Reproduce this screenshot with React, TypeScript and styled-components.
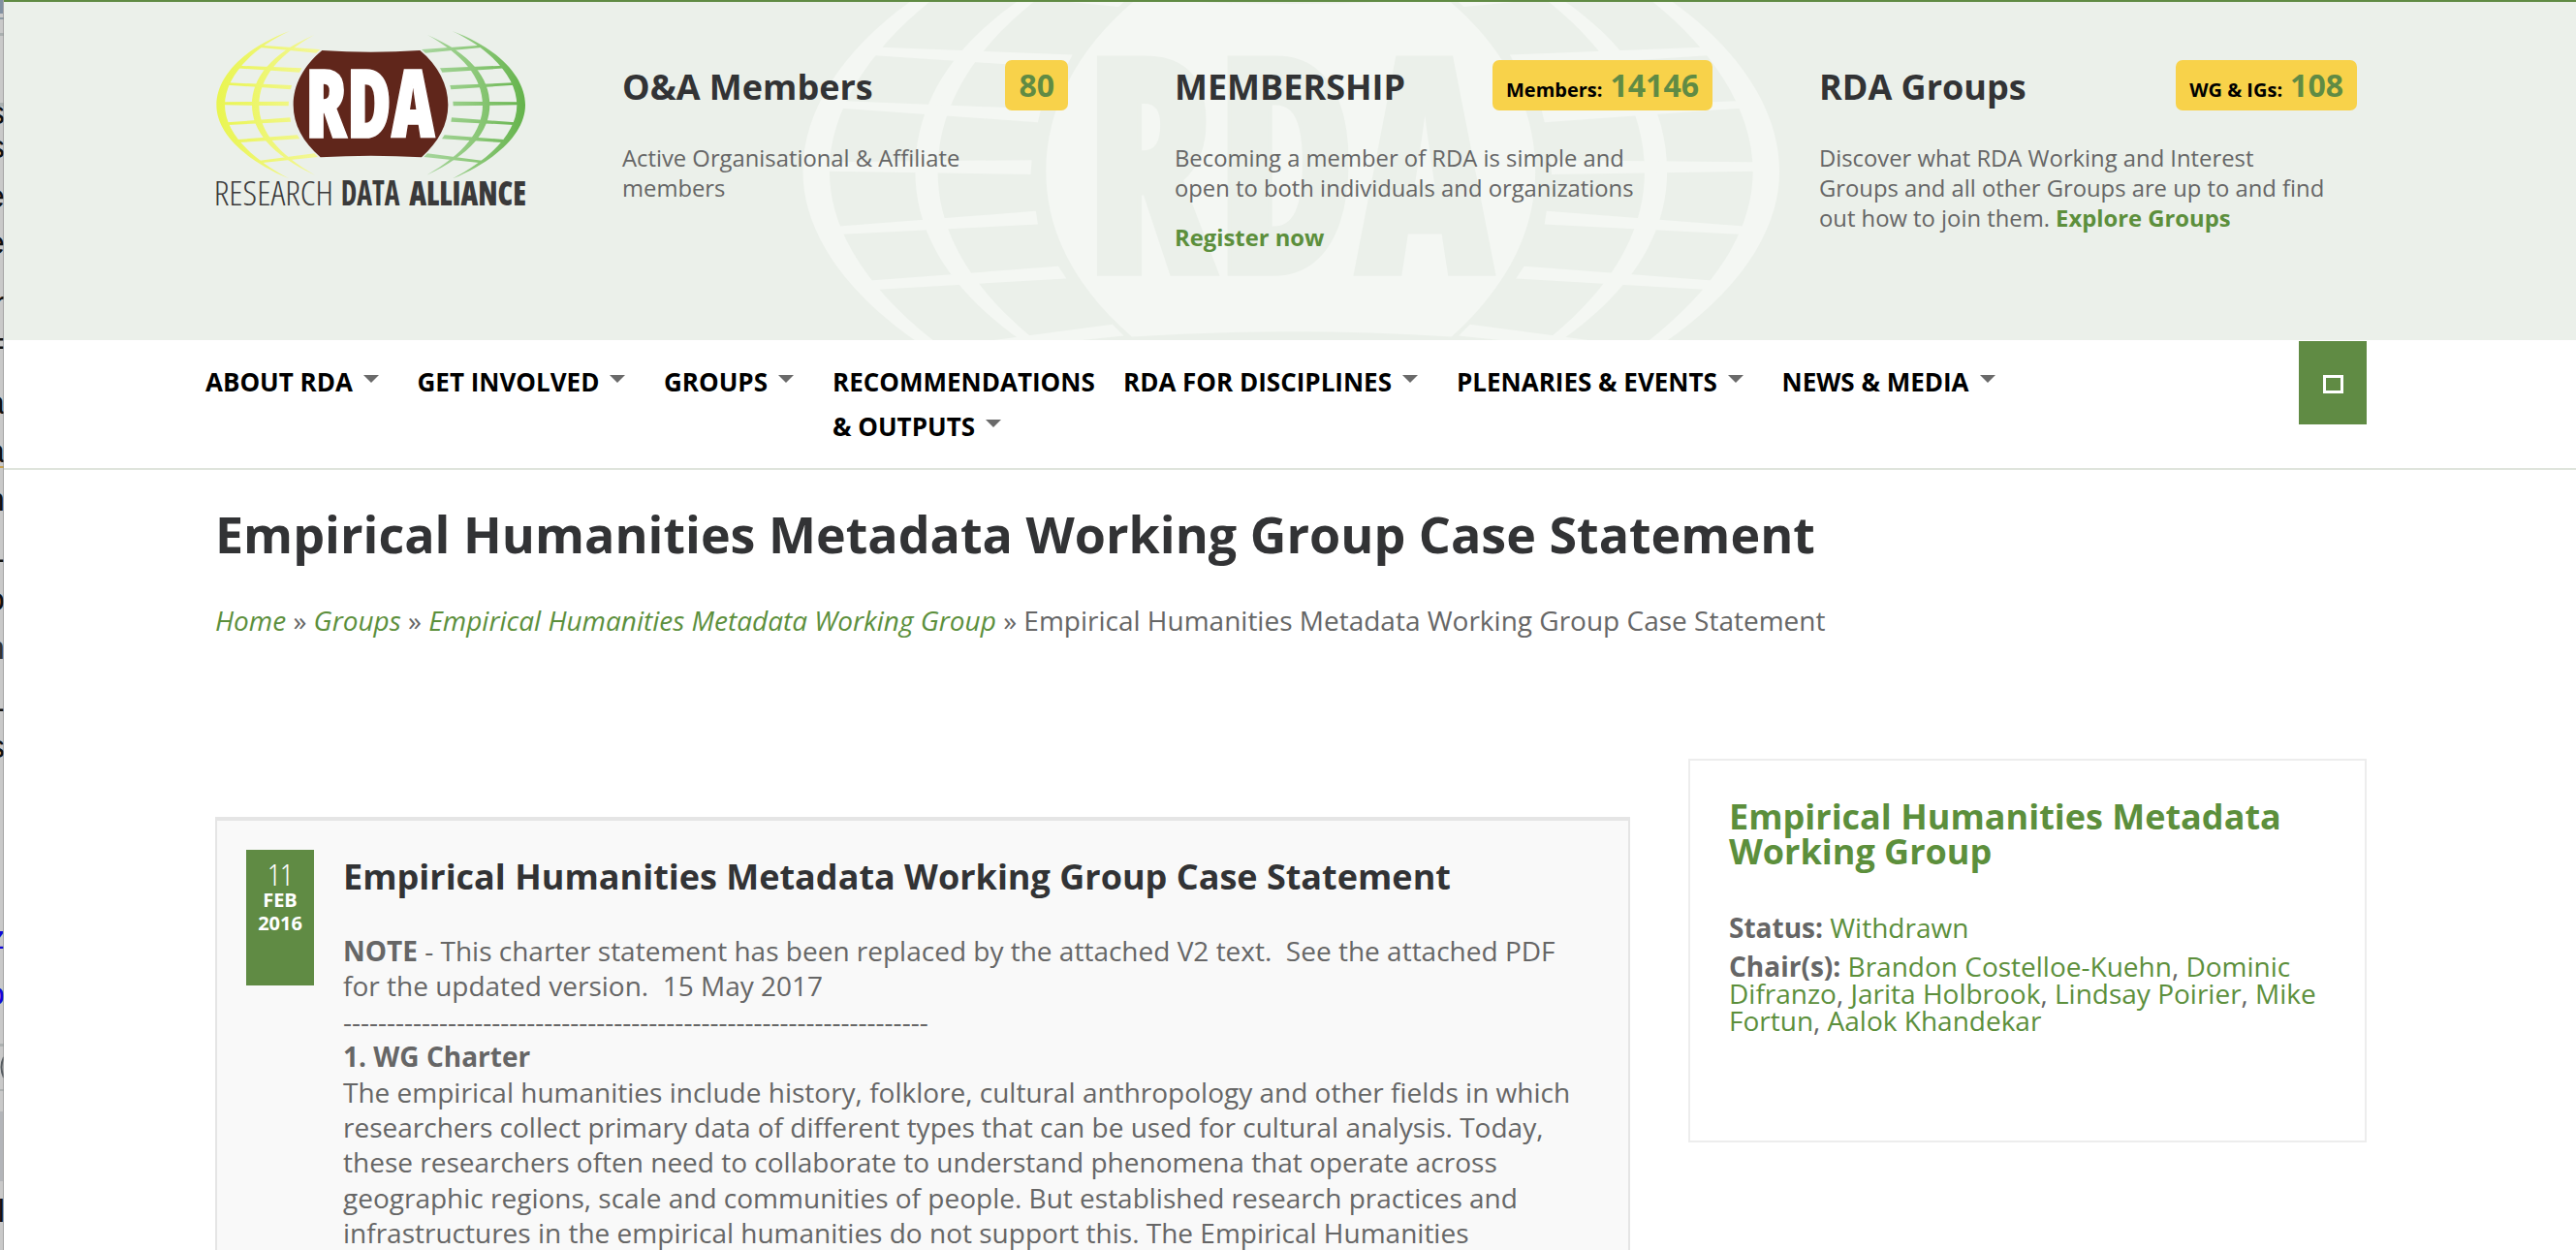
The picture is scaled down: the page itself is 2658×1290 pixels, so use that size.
import React from "react";
import styled, { createGlobalStyle } from "styled-components";

const GREEN = "#608b44";
const LINK = "#5c8f3c";
const GREY = "#666666";
const DARK = "#323335";
const PALE = "#ebf0ea";

const GlobalStyle = createGlobalStyle`
  *, *::before, *::after { box-sizing: border-box; }
  html, body { margin: 0; padding: 0; background: #fff; }
  body {
    height: 1290px;
    overflow: hidden;
    font-family: "Open Sans", "Noto Sans", sans-serif;
    font-size: 28px;
    color: ${GREY};
  }
  h1, h2, h3, p { margin: 0; }
`;

/* ---------- logo artwork ---------- */

const LATITUDES = [
  "M206,140 L391,153 L379,164 L206,147 Z",
  "M133,203 L334,211 L327,224 L130,211 Z",
  "M106,256 L303,264 L300,277 L104,263 Z",
  "M94,316 L294,314 L293,328 L94,325 Z",
  "M102,379 L298,364 L300,377 L104,387 Z",
  "M136,432 L320,418 L328,430 L140,441 Z",
  "M199,498 L373,475 L384,486 L205,505 Z",
];

type Paint = { left: string; right: string; core: string; letters: string };

function GlobeHalf({ fill }: { fill: string }) {
  return (
    <g fill={fill}>
      <path d="M297,96 C150,150 70,240 70,325 C70,408 150,492 295,553 C172,488 96,408 96,325 C96,240 176,152 297,96 Z" />
      <path d="M373,108 C240,165 180,240 180,325 C180,406 240,480 375,542 C262,478 202,406 202,325 C202,240 265,168 373,108 Z" />
      {LATITUDES.map((d) => (
        <path key={d} d={d} />
      ))}
    </g>
  );
}

const LogoLetters = styled.text`
  font-family: "Open Sans", sans-serif;
  font-size: 295px;
  font-weight: 800;
  font-stretch: 75%;
  stroke-width: 5px;
`;

function Globe({ left, right, core, letters }: Paint) {
  return (
    <g>
      <GlobeHalf fill={left} />
      <g transform="translate(1096 0) scale(-1 1)">
        <GlobeHalf fill={right} />
      </g>
      <path
        fill={core}
        d="M397,156 Q548,166 700,156 C757,203 787,262 787,325 C787,386 757,440 705,487 Q548,477 392,487 C338,440 308,386 308,325 C308,262 340,203 397,156 Z"
      />
      <LogoLetters x="346" y="425" textLength="400" lengthAdjust="spacingAndGlyphs" fill={letters} stroke={letters}>
        RDA
      </LogoLetters>
    </g>
  );
}

const LogoWord = styled.text<{ $weight: number }>`
  font-family: "Open Sans", sans-serif;
  font-size: 105px;
  font-stretch: 75%;
  font-weight: ${(p) => p.$weight};
  fill: #3a3a3a;
`;

const LogoSvg = styled.svg`
  display: block;
  width: 322px;
  height: 184px;
`;

function Logo() {
  return (
    <LogoSvg viewBox="66 90 966 552" role="img" aria-label="Research Data Alliance">
      <defs>
        <linearGradient id="sun" gradientUnits="userSpaceOnUse" x1="70" y1="0" x2="395" y2="0">
          <stop offset="0" stopColor="#e9f550" />
          <stop offset="1" stopColor="#f3f79a" />
        </linearGradient>
        <linearGradient id="leaf" gradientUnits="userSpaceOnUse" x1="70" y1="0" x2="395" y2="0">
          <stop offset="0" stopColor="#64b34b" />
          <stop offset="0.5" stopColor="#8ec97b" />
          <stop offset="1" stopColor="#a9d6a0" />
        </linearGradient>
      </defs>
      <Globe left="url(#sun)" right="url(#leaf)" core="#60261b" letters="#ffffff" />
      <LogoWord $weight={300} x="62" y="635" textLength="370" lengthAdjust="spacingAndGlyphs">
        RESEARCH
      </LogoWord>
      <LogoWord $weight={700} x="455" y="635" textLength="182" lengthAdjust="spacingAndGlyphs">
        DATA
      </LogoWord>
      <LogoWord $weight={800} x="667" y="635" textLength="362" lengthAdjust="spacingAndGlyphs">
        ALLIANCE
      </LogoWord>
    </LogoSvg>
  );
}

/* ---------- window behind, visible as a sliver on the left ---------- */

const Sliver = styled.svg`
  display: block;
  flex: none;
  width: 4px;
  height: 1290px;
  font-family: "Liberation Sans", sans-serif;
  font-size: 34px;
`;

const SLIVER_TEXT: [string, number, string][] = [
  ["s", 128, "#111"], ["s", 163, "#111"], ["e", 214, "#111"], ["e", 262, "#111"],
  ["r", 324, "#111"], ["=", 366, "#111"], ["a", 427, "#111"], ["a", 477, "#111"],
  ["n", 527, "#111"], ["-", 588, "#111"], ["o", 630, "#111"], ["n", 680, "#333"],
  ["-", 742, "#111"], ["s", 782, "#111"], ["z", 979, "#1206d8"], ["o", 1037, "#1206d8"],
  ["l", 1261, "#111"],
];

function BackWindow() {
  return (
    <Sliver aria-hidden="true">
      <rect width="4" height="1290" fill="#c9c9c9" />
      <rect width="3" height="14" fill="#8291a2" />
      <rect y="18" width="4" height="2" fill="#8c9aa4" />
      <rect y="34" width="4" height="3" fill="#aab0b0" />
      <rect y="106" width="4" height="4" fill="#aab0b0" />
      <rect y="481" width="4" height="2" fill="#c9a24e" />
      <rect y="1077" width="4" height="3" fill="#adb1b1" />
      <rect y="1124" width="4" height="2" fill="#adb1b1" />
      <rect y="1147" width="3" height="72" fill="#b3b5b9" />
      {SLIVER_TEXT.map(([ch, y, fill]) => (
        <text key={y} x="5" y={y} textAnchor="end" fill={fill}>
          {ch}
        </text>
      ))}
      <path d="M4,1091 Q-1,1101 4,1112" fill="none" stroke="#555b60" strokeWidth="2" />
      <rect x="3" width="1" height="1290" fill="#8e8e8e" opacity="0.6" />
    </Sliver>
  );
}

/* ---------- page frame ---------- */

const Frame = styled.div`
  display: flex;
  height: 1290px;
  overflow: hidden;
`;

const Page = styled.div`
  flex: 1;
  min-width: 0;
`;

const Container = styled.div`
  width: 2220px;
  margin-left: 218px;
`;

/* ---------- header ---------- */

const Header = styled.header`
  position: relative;
  height: 351px;
  overflow: hidden;
  border-top: 2px solid ${GREEN};
  background: ${PALE};
`;

const Watermark = styled.svg`
  position: absolute;
  left: 750px;
  top: -2px;
  width: 1160px;
  height: 351px;
`;

const HeaderRow = styled(Container)`
  position: relative;
  display: flex;
`;

const Brand = styled.a`
  width: 420px;
  padding-top: 28px;
`;

const Promo = styled.section<{ $width: number; $gap?: number }>`
  width: ${(p) => p.$width}px;
  margin-right: ${(p) => p.$gap ?? 0}px;
  padding-top: 60px;
`;

const PromoHead = styled.div`
  display: flex;
  justify-content: space-between;
  height: 86px;
`;

const PromoTitle = styled.h2`
  margin-top: 8px;
  font-size: 36px;
  line-height: 40px;
  color: ${DARK};
  white-space: nowrap;
`;

const Badge = styled.div`
  display: flex;
  align-items: baseline;
  height: 52px;
  padding: 0 14px;
  border-radius: 7px;
  background: #f8d24a;
  font-size: 20px;
  font-weight: 700;
  color: #000;
  white-space: nowrap;
`;

const Count = styled.span`
  font-size: 32px;
  line-height: 51px;
  color: ${GREEN};
`;

const BadgeLabel = styled.span`
  margin-right: 8px;
`;

const PromoText = styled.p<{ $width: number }>`
  width: ${(p) => p.$width}px;
  font-size: 23.8px;
  line-height: 31px;
  & + & {
    margin-top: 20px;
  }
`;

const StrongLink = styled.a`
  font-weight: 700;
  color: ${LINK};
`;

/* ---------- navigation ---------- */

const NavBar = styled.nav`
  height: 134px;
  background: #fff;
  border-bottom: 2px solid #dfe4dc;
`;

const NavRow = styled.div`
  display: flex;
  margin-left: 208px;
  width: 2230px;
`;

const NavItem = styled.a<{ $width: number }>`
  width: ${(p) => p.$width}px;
  padding-top: 21px;
  font-size: 26px;
  font-weight: 700;
  line-height: 45.5px;
  color: #000;
  white-space: nowrap;
`;

const Caret = styled.span`
  display: inline-block;
  margin-left: 11px;
  vertical-align: 9px;
  border: 8px solid transparent;
  border-top-color: #6a6a6a;
  border-bottom: 0;
`;

const SearchButton = styled.button`
  display: flex;
  align-items: center;
  justify-content: center;
  width: 70px;
  height: 86px;
  margin: 1px 0 0 auto;
  padding: 3px 0 0;
  border: 0;
  background: ${GREEN};
`;

const SearchGlyph = styled.span`
  width: 21px;
  height: 19px;
  border: 3px solid #fff;
`;

/* ---------- title block ---------- */

const PageTitle = styled.h1`
  margin-top: 36px;
  font-size: 52px;
  line-height: 60px;
  color: ${DARK};
  white-space: nowrap;
`;

const Breadcrumb = styled.p`
  margin-top: 40px;
  font-size: 28px;
  line-height: 38px;
  white-space: nowrap;
`;

const Crumb = styled.a`
  font-style: italic;
  color: ${LINK};
`;

/* ---------- content ---------- */

const Columns = styled.div`
  display: flex;
  justify-content: space-between;
  align-items: flex-start;
  margin-top: 124px;
`;

const Article = styled.article`
  display: flex;
  gap: 30px;
  width: 1460px;
  height: 520px;
  margin-top: 60px;
  padding: 30px;
  border: 2px solid #e5e5e5;
  border-top-width: 4px;
  background: #f9f9f9;
`;

const DateBox = styled.time`
  display: flex;
  flex: none;
  flex-direction: column;
  align-items: center;
  width: 70px;
  height: 140px;
  padding-top: 10px;
  background: ${GREEN};
  color: #fff;
  font-size: 20px;
  font-weight: 700;
  line-height: 24px;
`;

const Day = styled.span`
  font-size: 32px;
  font-weight: 300;
  font-stretch: 75%;
  line-height: 30px;
`;

const ArticleBody = styled.div`
  width: 1277px;
  line-height: 36.4px;
`;

const ArticleTitle = styled.h2`
  margin: 4px 0 34px;
  font-size: 36px;
  line-height: 48px;
  color: ${DARK};
`;

const Sidebar = styled.aside`
  width: 700px;
  height: 396px;
  padding: 40px 38px 0 40px;
  border: 2px solid #ededed;
  background: #fff;
`;

const SidebarTitle = styled.h3`
  margin-bottom: 46px;
  font-size: 36px;
  line-height: 36px;
  color: ${LINK};
`;

const Fact = styled.p`
  line-height: 28px;
  margin-bottom: 12px;
`;

const Person = styled.a`
  color: ${LINK};
`;

const NAV: { lines: string[]; width: number }[] = [
  { lines: ["ABOUT RDA"], width: 218.5 },
  { lines: ["GET INVOLVED"], width: 254.5 },
  { lines: ["GROUPS"], width: 174 },
  { lines: ["RECOMMENDATIONS", "& OUTPUTS"], width: 300 },
  { lines: ["RDA FOR DISCIPLINES"], width: 344 },
  { lines: ["PLENARIES & EVENTS"], width: 335.5 },
  { lines: ["NEWS & MEDIA"], width: 240 },
];

const CHAIRS = ["Brandon Costelloe-Kuehn", "Dominic Difranzo", "Jarita Holbrook", "Lindsay Poirier", "Mike Fortun", "Aalok Khandekar"];

export default function App() {
  return (
    <Frame>
      <GlobalStyle />
      <BackWindow />
      <Page>
        <Header>
          <Watermark aria-hidden="true">
            <g transform="translate(0.7 -165.8) scale(1.054)">
              <Globe left="#f4f7f3" right="#f4f7f3" core="#f4f7f3" letters={PALE} />
            </g>
          </Watermark>
          <HeaderRow>
            <Brand>
              <Logo />
            </Brand>
            <Promo $width={460} $gap={110}>
              <PromoHead>
                <PromoTitle>O&amp;A Members</PromoTitle>
                <Badge>
                  <Count>80</Count>
                </Badge>
              </PromoHead>
              <PromoText $width={400}>Active Organisational &amp; Affiliate members</PromoText>
            </Promo>
            <Promo $width={555} $gap={110}>
              <PromoHead>
                <PromoTitle>MEMBERSHIP</PromoTitle>
                <Badge>
                  <BadgeLabel>Members:</BadgeLabel>
                  <Count>14146</Count>
                </Badge>
              </PromoHead>
              <PromoText $width={500}>Becoming a member of RDA is simple and open to both individuals and organizations</PromoText>
              <PromoText $width={500}>
                <StrongLink>Register now</StrongLink>
              </PromoText>
            </Promo>
            <Promo $width={555}>
              <PromoHead>
                <PromoTitle>RDA Groups</PromoTitle>
                <Badge>
                  <BadgeLabel>WG &amp; IGs:</BadgeLabel>
                  <Count>108</Count>
                </Badge>
              </PromoHead>
              <PromoText $width={530}>
                Discover what RDA Working and Interest Groups and all other Groups are up to and find out how to join them.{" "}
                <StrongLink>Explore Groups</StrongLink>
              </PromoText>
            </Promo>
          </HeaderRow>
        </Header>

        <NavBar>
          <NavRow>
            {NAV.map(({ lines, width }) => (
              <NavItem key={lines[0]} $width={width}>
                {lines.map((line, i) => (
                  <React.Fragment key={line}>
                    {i > 0 && <br />}
                    {line}
                  </React.Fragment>
                ))}
                <Caret />
              </NavItem>
            ))}
            <SearchButton aria-label="Search">
              <SearchGlyph />
            </SearchButton>
          </NavRow>
        </NavBar>

        <Container>
          <PageTitle>Empirical Humanities Metadata Working Group Case Statement</PageTitle>
          <Breadcrumb>
            <Crumb>Home</Crumb> » <Crumb>Groups</Crumb> » <Crumb>Empirical Humanities Metadata Working Group</Crumb> » Empirical
            Humanities Metadata Working Group Case Statement
          </Breadcrumb>

          <Columns>
            <Article>
              <DateBox>
                <Day>11</Day>
                <span>FEB</span>
                <span>2016</span>
              </DateBox>
              <ArticleBody>
                <ArticleTitle>Empirical Humanities Metadata Working Group Case Statement</ArticleTitle>
                <p>
                  <strong>NOTE</strong> - This charter statement has been replaced by the attached V2 text.&nbsp; See the attached PDF
                  for the updated version.&nbsp; 15 May 2017
                </p>
                <p>{"-".repeat(67)}</p>
                <p>
                  <strong>1. WG Charter</strong>
                </p>
                <p>
                  The empirical humanities include history, folklore, cultural anthropology and other fields in which researchers
                  collect primary data of different types that can be used for cultural analysis. Today, these researchers often need
                  to collaborate to understand phenomena that operate across geographic regions, scale and communities of people. But
                  established research practices and infrastructures in the empirical humanities do not support this. The Empirical
                  Humanities
                </p>
              </ArticleBody>
            </Article>

            <Sidebar>
              <SidebarTitle>Empirical Humanities Metadata Working Group</SidebarTitle>
              <Fact>
                <strong>Status:</strong> <Person>Withdrawn</Person>
              </Fact>
              <Fact>
                <strong>Chair(s):</strong>{" "}
                {CHAIRS.map((name, i) => (
                  <React.Fragment key={name}>
                    {i > 0 && ", "}
                    <Person>{name}</Person>
                  </React.Fragment>
                ))}
              </Fact>
            </Sidebar>
          </Columns>
        </Container>
      </Page>
    </Frame>
  );
}
